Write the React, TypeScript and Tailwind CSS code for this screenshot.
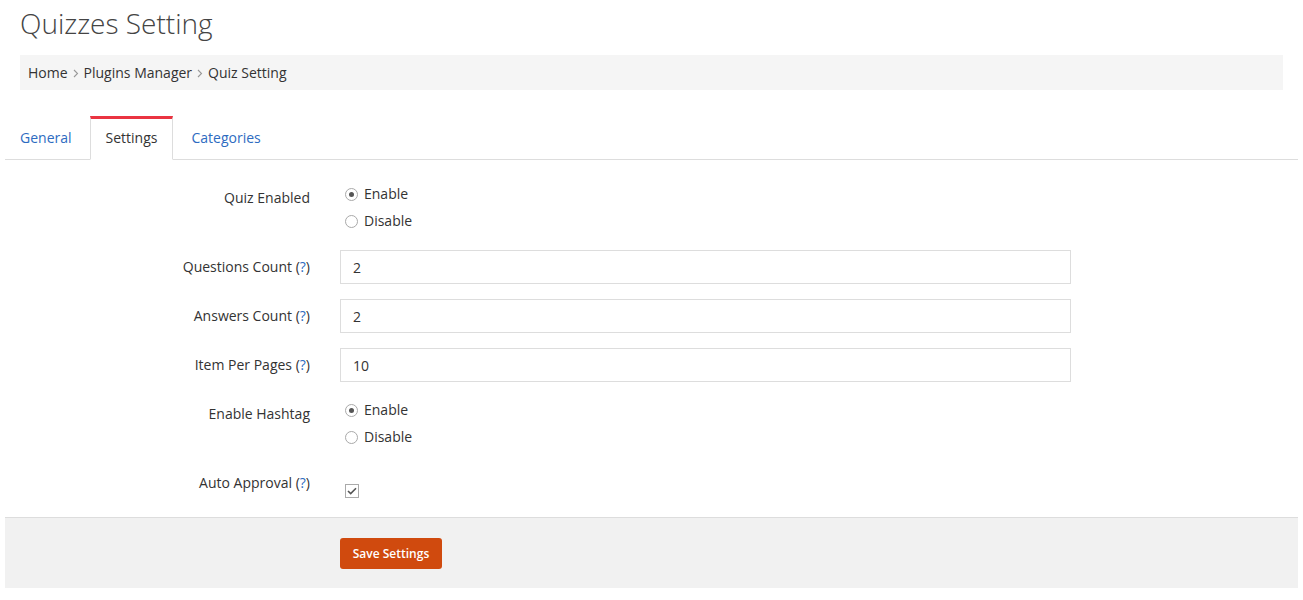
import { useState } from 'react';

type Choice = 'enable' | 'disable';

function Radio({ checked, label, onClick }: { checked: boolean; label: string; onClick: () => void }) {
  return (
    <label onClick={onClick} className="flex items-center h-[20px] cursor-pointer">
      <span className="w-[13px] h-[13px] rounded-full border border-[#a9a9a9] bg-white flex items-center justify-center ml-[5px] mr-[6px]">
        {checked && <span className="w-[5px] h-[5px] rounded-full bg-[#555]" />}
      </span>
      <span>{label}</span>
    </label>
  );
}

function Help() {
  return (
    <>
      {' '}(<a href="#" className="text-[#2d6bc1]">?</a>)
    </>
  );
}

function Chevron() {
  return (
    <svg width="6" height="9" viewBox="0 0 6 9" className="mx-[5px] mt-[1px]">
      <path d="M1 1l3.5 3.5L1 8" fill="none" stroke="#999" strokeWidth="1.1" />
    </svg>
  );
}

export default function App() {
  const [quizEnabled, setQuizEnabled] = useState<Choice>('enable');
  const [hashtag, setHashtag] = useState<Choice>('enable');
  const [autoApproval, setAutoApproval] = useState(true);
  const [activeTab, setActiveTab] = useState('Settings');

  const tabs = ['General', 'Settings', 'Categories'];

  return (
    <div className="bg-white text-[#333] text-[14px] min-h-[600px]" style={{ fontFamily: '"Open Sans", "Liberation Sans", sans-serif' }}>
      <div className="px-[5px]">
        {/* Header */}
        <div className="px-[15px] pt-[7px]">
          <h1 className="text-[28px] leading-[33px] font-light text-[#444]">Quizzes Setting</h1>
          <div className="mt-[15px] h-[35px] bg-[#f5f5f5] flex items-center px-[8px] text-[#333]">
            <a href="#">Home</a>
            <Chevron />
            <a href="#">Plugins Manager</a>
            <Chevron />
            <span>Quiz Setting</span>
          </div>
        </div>

        {/* Tabs */}
        <ul className="mt-[26px] flex border-b border-[#ddd]">
          {tabs.map((t, i) => {
            const active = t === activeTab;
            return (
              <li key={t} className={i === 0 ? 'mr-[2px] -mb-px -ml-px' : 'mr-[2px] -mb-px'}>
                <a
                  href="#"
                  onClick={(e) => {
                    e.preventDefault();
                    setActiveTab(t);
                  }}
                  className={
                    active
                      ? 'block px-[15px] pt-[9px] pb-[11px] leading-[20px] border-x border-t-[3px] border-x-[#ddd] border-t-[#ea3441] border-b border-b-white bg-white text-[#333]'
                      : 'block px-[15px] pt-[9px] pb-[11px] leading-[20px] border-x border-t-[3px] border-b border-transparent text-[#2d6bc1]'
                  }
                >
                  {t}
                </a>
              </li>
            );
          })}
        </ul>

        {/* Form */}
        <div className="pt-[21px]">
          <div className="flex mb-[15px]">
            <div className="w-[305px] text-right pt-[7px] leading-[20px]">Quiz Enabled</div>
            <div className="ml-[30px] pt-[3px] pb-[4px] flex flex-col gap-[7px] leading-[20px]">
              <Radio checked={quizEnabled === 'enable'} label="Enable" onClick={() => setQuizEnabled('enable')} />
              <Radio checked={quizEnabled === 'disable'} label="Disable" onClick={() => setQuizEnabled('disable')} />
            </div>
          </div>

          {[
            ['Questions Count', '2'],
            ['Answers Count', '2'],
            ['Item Per Pages', '10'],
          ].map(([label, value]) => (
            <div key={label} className="flex mb-[15px]">
              <div className="w-[305px] text-right pt-[7px] leading-[20px]">
                {label}
                <Help />
              </div>
              <input
                defaultValue={value}
                className="ml-[30px] w-[731px] h-[34px] border border-[#ddd] px-[12px] text-[14px] text-[#333] outline-none"
              />
            </div>
          ))}

          <div className="flex mb-[15px]">
            <div className="w-[305px] text-right pt-[7px] leading-[20px]">Enable Hashtag</div>
            <div className="ml-[30px] pt-[3px] pb-[4px] flex flex-col gap-[7px] leading-[20px]">
              <Radio checked={hashtag === 'enable'} label="Enable" onClick={() => setHashtag('enable')} />
              <Radio checked={hashtag === 'disable'} label="Disable" onClick={() => setHashtag('disable')} />
            </div>
          </div>

          <div className="flex pb-[19px]">
            <div className="w-[305px] text-right pt-[7px] leading-[20px]">
              Auto Approval
              <Help />
            </div>
            <div className="ml-[35px] pt-[18px]">
              <span
                onClick={() => setAutoApproval(!autoApproval)}
                className="w-[14px] h-[14px] border border-[#aaa] bg-white flex items-center justify-center cursor-pointer"
              >
                {autoApproval && (
                  <svg width="10" height="8" viewBox="0 0 10 8">
                    <path d="M1 4l2.7 2.6L9 1.2" fill="none" stroke="#555" strokeWidth="1.6" />
                  </svg>
                )}
              </span>
            </div>
          </div>
        </div>

        {/* Footer */}
        <div className="bg-[#f1f1f1] border-t border-[#ddd] h-[71px] pt-[20px] pl-[335px]">
          <button className="h-[31px] w-[102px] rounded-[3px] bg-[#d04a0e] text-white text-[12px] font-semibold">
            Save Settings
          </button>
        </div>
      </div>
    </div>
  );
}
